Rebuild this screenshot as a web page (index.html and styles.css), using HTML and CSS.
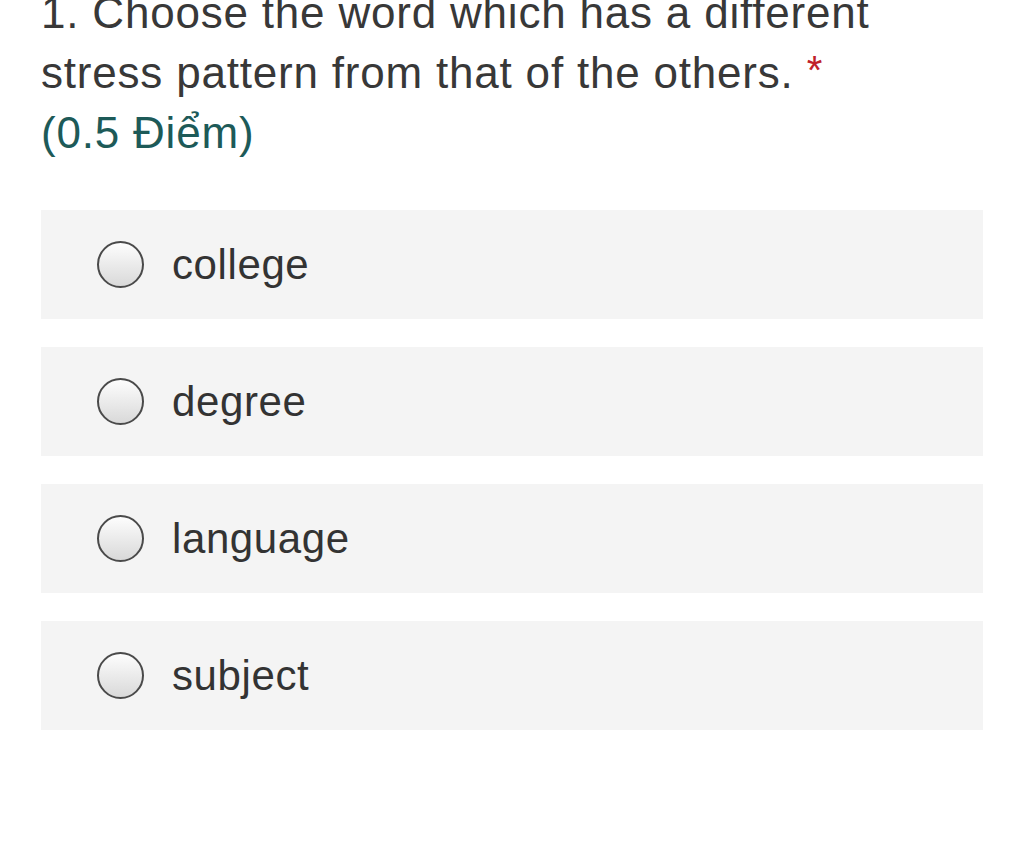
FILE: index.html
```html
<!DOCTYPE html>
<html>
<head>
<meta charset="utf-8">
<link rel="stylesheet" href="styles.css">
</head>
<body>
<div class="page">
  <div class="question">
    <div class="title">1. Choose the word which has a different stress pattern from that of the others. <span class="req">*</span></div>
    <div class="points">(0.5 Điểm)</div>
  </div>
  <div class="options">
    <label class="option"><span class="radio"></span><span class="text">college</span></label>
    <label class="option"><span class="radio"></span><span class="text">degree</span></label>
    <label class="option"><span class="radio"></span><span class="text">language</span></label>
    <label class="option"><span class="radio"></span><span class="text">subject</span></label>
  </div>
</div>
</body>
</html>
```
FILE: styles.css
```css
html, body {
  margin: 0;
  padding: 0;
  background: #ffffff;
}
body {
  font-family: "Liberation Sans", Arial, sans-serif;
  overflow: hidden;
}
.page {
  padding: 0 41px;
}
.question {
  margin-top: -17px;
  font-size: 44px;
  line-height: 60px;
  letter-spacing: 0.8px;
  width: 900px;
}
.title {
  color: #383838;
}
.req {
  color: #c0202a;
  font-size: 40px;
  letter-spacing: 0;
  line-height: 0;
  vertical-align: 4px;
}
.points {
  color: #1d5a58;
}
.options {
  margin-top: 47px;
  display: flex;
  flex-direction: column;
  gap: 28px;
}
.option {
  display: flex;
  align-items: center;
  height: 109px;
  background: #f4f4f4;
  padding-left: 56px;
}
.radio {
  width: 43px;
  height: 43px;
  border: 2.5px solid #4a4a4a;
  border-radius: 50%;
  background: linear-gradient(#fdfdfd, #d9d9d9);
  flex: none;
}
.text {
  margin-left: 28px;
  font-size: 42px;
  color: #333333;
  letter-spacing: 0.6px;
}
```
